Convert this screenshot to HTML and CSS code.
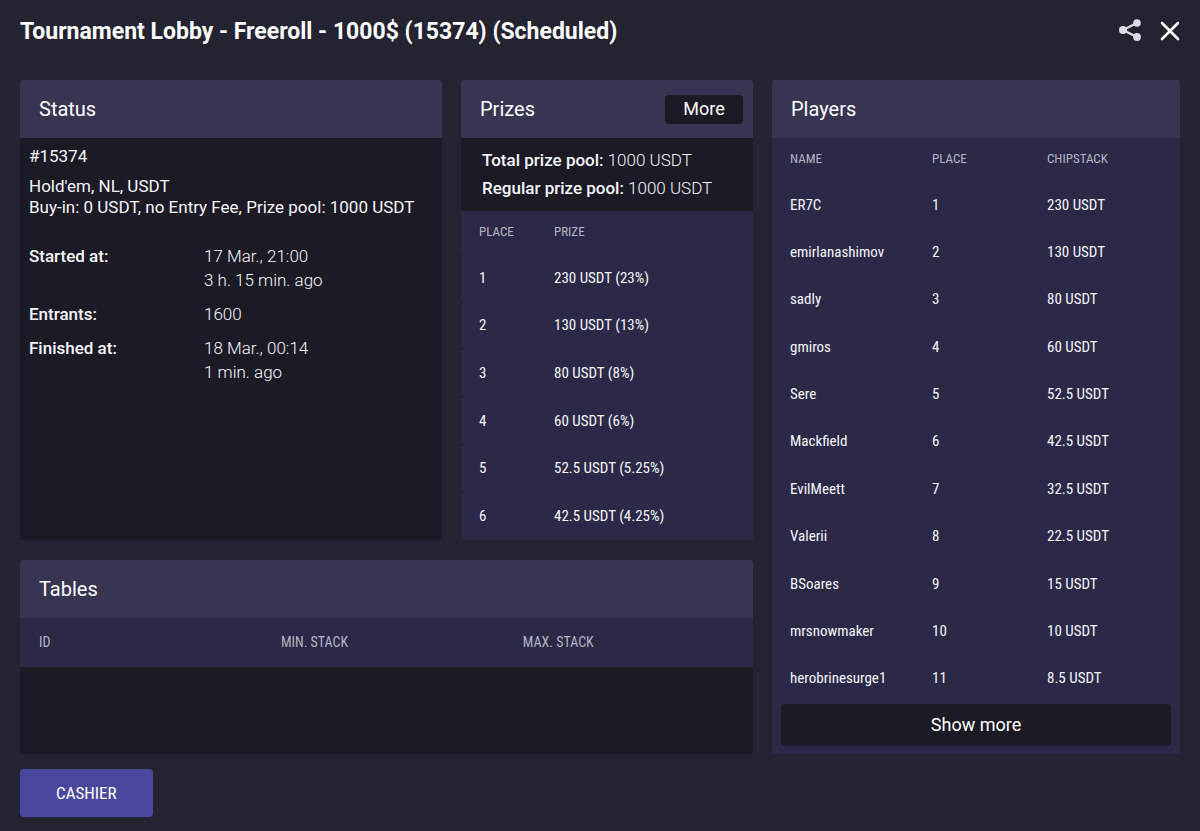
FILE: index.html
```html
<!DOCTYPE html>
<html lang="en">
<head>
  <meta charset="utf-8">
  <title>Tournament Lobby</title>
  <link rel="stylesheet" href="styles.css">
</head>
<body>
  <header class="lobby-header">
    <h1>Tournament Lobby - Freeroll - 1000$ (15374) (Scheduled)</h1>
    <div class="header-actions">
      <button type="button" class="icon-button" aria-label="Share">
        <svg width="24" height="24" viewBox="0 0 24 24" fill="#dcdcdf" stroke="#dcdcdf">
          <path d="M19 4 5 11 19 18" fill="none" stroke-width="2.4"/>
          <circle cx="19" cy="4" r="3.8" stroke="none"/>
          <circle cx="5" cy="11" r="4" stroke="none"/>
          <circle cx="19" cy="18" r="3.9" stroke="none"/>
        </svg>
      </button>
      <button type="button" class="icon-button" aria-label="Close">
        <svg width="20" height="20" viewBox="0 0 20 20" fill="none" stroke="#fff" stroke-width="2.6" stroke-linecap="round">
          <path d="M2 2 18 18M18 2 2 18"/>
        </svg>
      </button>
    </div>
  </header>

  <main class="lobby-grid">
    <section class="panel status">
      <div class="panel-header">
        <h2>Status</h2>
      </div>
      <div class="status-body">
        <p class="tournament-id">#15374</p>
        <p>Hold'em, NL, USDT<br>Buy-in: 0 USDT, no Entry Fee, Prize pool: 1000 USDT</p>
        <dl class="details">
          <dt>Started at:</dt>
          <dd>17 Mar., 21:00<br>3 h. 15 min. ago</dd>
          <dt>Entrants:</dt>
          <dd>1600</dd>
          <dt>Finished at:</dt>
          <dd>18 Mar., 00:14<br>1 min. ago</dd>
        </dl>
      </div>
    </section>

    <section class="panel prizes">
      <div class="panel-header">
        <h2>Prizes</h2>
        <button type="button" class="more-button">More</button>
      </div>
      <div class="prize-pool">
        <p><strong>Total prize pool:</strong> 1000 USDT</p>
        <p><strong>Regular prize pool:</strong> 1000 USDT</p>
      </div>
      <table class="list prize-list">
        <thead>
          <tr><th>PLACE</th><th>PRIZE</th></tr>
        </thead>
        <tbody>
          <tr><td>1</td><td>230 USDT (23%)</td></tr>
          <tr><td>2</td><td>130 USDT (13%)</td></tr>
          <tr><td>3</td><td>80 USDT (8%)</td></tr>
          <tr><td>4</td><td>60 USDT (6%)</td></tr>
          <tr><td>5</td><td>52.5 USDT (5.25%)</td></tr>
          <tr><td>6</td><td>42.5 USDT (4.25%)</td></tr>
        </tbody>
      </table>
    </section>

    <section class="panel players">
      <div class="panel-header">
        <h2>Players</h2>
      </div>
      <table class="list player-list">
        <thead>
          <tr><th>NAME</th><th>PLACE</th><th>CHIPSTACK</th></tr>
        </thead>
        <tbody>
          <tr><td>ER7C</td><td>1</td><td>230 USDT</td></tr>
          <tr><td>emirlanashimov</td><td>2</td><td>130 USDT</td></tr>
          <tr><td>sadly</td><td>3</td><td>80 USDT</td></tr>
          <tr><td>gmiros</td><td>4</td><td>60 USDT</td></tr>
          <tr><td>Sere</td><td>5</td><td>52.5 USDT</td></tr>
          <tr><td>Mackfield</td><td>6</td><td>42.5 USDT</td></tr>
          <tr><td>EvilMeett</td><td>7</td><td>32.5 USDT</td></tr>
          <tr><td>Valerii</td><td>8</td><td>22.5 USDT</td></tr>
          <tr><td>BSoares</td><td>9</td><td>15 USDT</td></tr>
          <tr><td>mrsnowmaker</td><td>10</td><td>10 USDT</td></tr>
          <tr><td>herobrinesurge1</td><td>11</td><td>8.5 USDT</td></tr>
        </tbody>
      </table>
      <button type="button" class="show-more">Show more</button>
    </section>

    <section class="panel tables">
      <div class="panel-header">
        <h2>Tables</h2>
      </div>
      <table class="list table-list">
        <thead>
          <tr><th>ID</th><th>MIN. STACK</th><th>MAX. STACK</th></tr>
        </thead>
      </table>
    </section>
  </main>

  <footer class="lobby-footer">
    <button type="button" class="cashier-button">CASHIER</button>
  </footer>
</body>
</html>
```
FILE: styles.css
```css
* {
  box-sizing: border-box;
}

body {
  margin: 0;
  min-height: 100vh;
  display: flex;
  flex-direction: column;
  background-color: #242331;
  color: #f6f6fa;
  font-family: Roboto, Arial, sans-serif;
  font-size: 17px;
}

h1,
h2,
p,
dl,
dd {
  margin: 0;
}

button {
  padding: 0 0 2px;
  border: none;
  color: #fff;
  font-family: inherit;
  font-size: 18px;
  cursor: pointer;
}

.lobby-header {
  display: flex;
  justify-content: space-between;
  align-items: flex-start;
  height: 80px;
  padding: 17px 20px 0;
}

h1 {
  font-size: 23px;
  line-height: 30px;
  font-weight: 700;
  color: #fff;
}

.header-actions {
  display: flex;
  align-items: center;
  gap: 18px;
  height: 28px;
}

.icon-button {
  display: flex;
  padding: 0;
  background: none;
}

.lobby-grid {
  flex: 1;
  display: grid;
  grid-template-columns: 422fr 292fr 408fr;
  grid-template-rows: 460fr 194fr;
  gap: 20px 19px;
  padding: 0 20px;
}

.panel {
  display: flex;
  flex-direction: column;
  background-color: #1b1a25;
  border-radius: 3px 3px 0 0;
  overflow: hidden;
}

.players {
  grid-column: 3;
  grid-row: 1 / 3;
  background-color: #2b2947;
}

.tables {
  grid-column: 1 / 3;
}

.panel-header {
  display: flex;
  justify-content: space-between;
  align-items: center;
  height: 58px;
  padding: 0 10px 0 19px;
  background-color: #373552;
}

h2 {
  font-size: 20px;
  font-weight: 400;
  color: #fff;
}

.more-button {
  width: 78px;
  height: 29px;
  background-color: #1b1a25;
  border-radius: 4px;
}

.status-body {
  padding: 8px 9px;
  line-height: 21px;
}

.tournament-id {
  margin-bottom: 9px;
}

.details {
  display: grid;
  grid-template-columns: 175px 1fr;
  row-gap: 10px;
  margin-top: 26px;
  line-height: 24px;
}

dt,
strong {
  font-weight: 500;
}

dd,
.prize-pool {
  font-weight: 300;
}

.prize-pool {
  padding: 8px 21px 9px;
  line-height: 28px;
}

.list {
  flex: 1;
  width: 100%;
  border-spacing: 0;
  table-layout: fixed;
  font-family: "Roboto Condensed", Roboto, sans-serif;
  font-size: 15px;
  text-align: left;
}

.list th {
  height: 43px;
  padding: 0 0 2px 18px;
  background-color: #2b2947;
  font-size: 13px;
  font-weight: 400;
  color: #b5b4c5;
}

.list td {
  padding: 14px 0 14px 18px;
  background-color: #2b2947;
  line-height: 18px;
}

.prize-list th:first-child {
  width: 75px;
}

.prize-list td:first-child {
  border-radius: 3px 0 0 3px;
}

.player-list th:first-child {
  width: 142px;
}

.player-list th:nth-child(2) {
  width: 115px;
}

.list.table-list {
  flex: none;
}

.table-list th {
  width: 33%;
  height: 49px;
  padding-left: 19px;
  font-size: 14px;
}

.table-list th:last-child {
  width: auto;
}

.show-more {
  height: 42px;
  margin: 2px 9px 8px;
  background-color: #1b1a25;
  border-radius: 4px;
}

.lobby-footer {
  padding: 15px 20px 14px;
}

.cashier-button {
  display: block;
  height: 48px;
  padding: 0 36px;
  background-color: #4a489c;
  border-radius: 4px;
  font-family: "Roboto Condensed", Roboto, sans-serif;
  font-size: 17px;
}
```
